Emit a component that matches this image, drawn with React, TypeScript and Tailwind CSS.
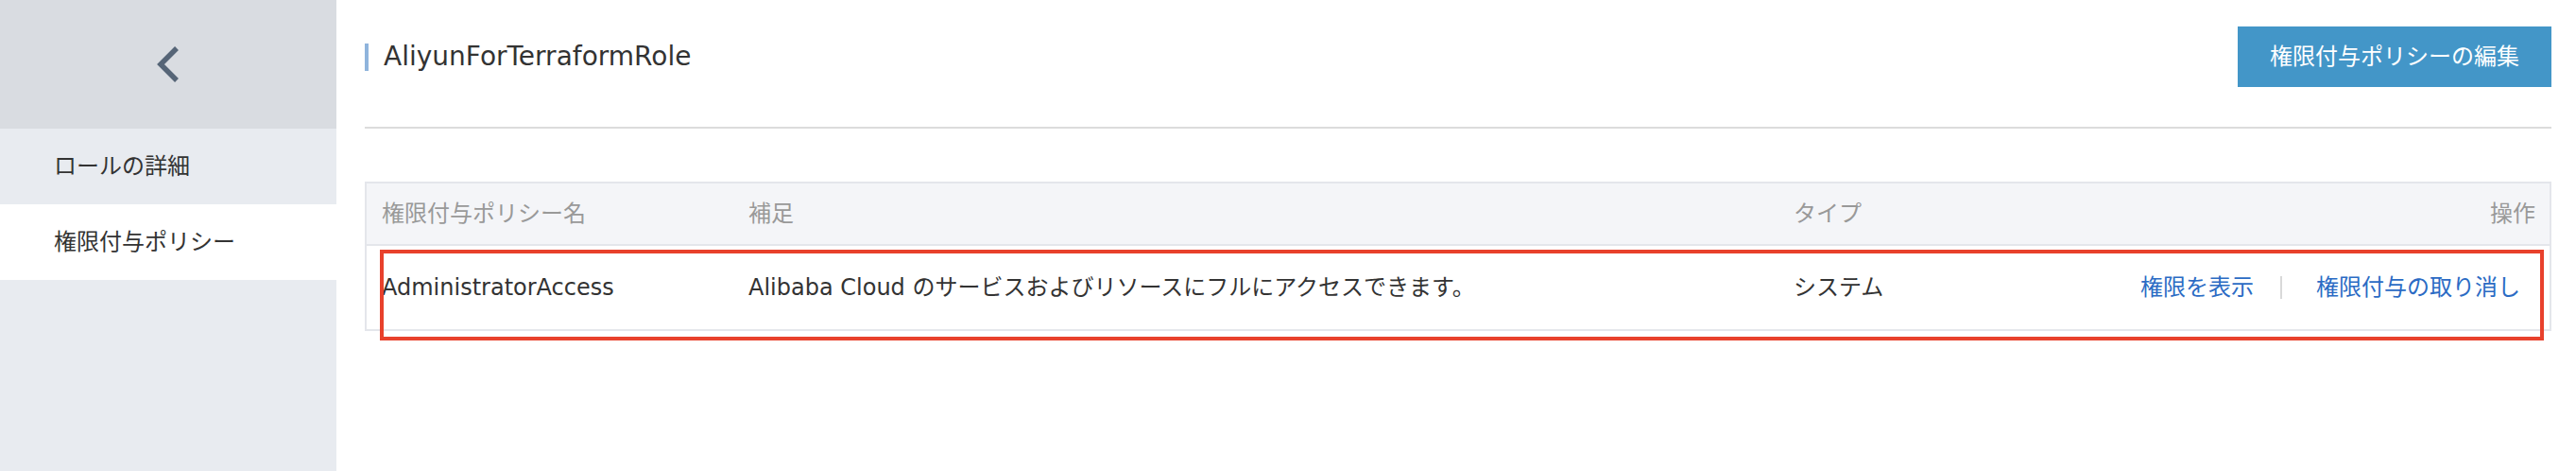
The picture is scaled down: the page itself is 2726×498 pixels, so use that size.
const font = "font-['DejaVu_Sans','Noto_Sans_CJK_JP',sans-serif]";

const menu = [
  { label: "ロールの詳細", active: false },
  { label: "権限付与ポリシー", active: true },
];

function Sidebar() {
  return (
    <aside className="w-[356px] shrink-0 bg-[#e8ebf0] flex flex-col">
      <div className="h-[136px] bg-[#d9dce1] flex items-center justify-center">
        <svg width="26" height="40" viewBox="0 0 26 40" fill="none" aria-hidden>
          <path d="M22 3 L5 20 L22 37" stroke="#566577" strokeWidth="5.5" strokeLinecap="butt" strokeLinejoin="miter" />
        </svg>
      </div>
      {menu.map((m) => (
        <div
          key={m.label}
          className={`h-[80px] flex items-center pl-[57px] text-[24px] text-[#333] ${m.active ? "bg-white" : "bg-[#e8ebf0]"}`}
        >
          {m.label}
        </div>
      ))}
    </aside>
  );
}

function PolicyTable() {
  return (
    <div className="relative mt-[56px] border-2 border-[#e4e6eb]">
      <div className="grid grid-cols-[388px_1106px_1fr_auto] h-[66px] items-center bg-[#f4f5f8] text-[24px] text-[#999] border-b-2 border-[#e4e6eb]">
        <div className="pl-[16px]">権限付与ポリシー名</div>
        <div className="pl-[16px]">補足</div>
        <div className="pl-[16px]">タイプ</div>
        <div className="pr-[15px] text-right">操作</div>
      </div>
      <div className="grid grid-cols-[388px_1106px_1fr_auto] h-[88px] items-center bg-white text-[24px] text-[#333]">
        <div className="pl-[16px]">AdministratorAccess</div>
        <div className="pl-[16px]">Alibaba Cloud のサービスおよびリソースにフルにアクセスできます。</div>
        <div className="pl-[16px]">システム</div>
        <div className="pr-[31px] flex items-center text-[#2b6bc4]">
          <span>権限を表示</span>
          <span className="ml-[28px] mr-[36px] w-[2px] h-[24px] bg-[#d9d9d9]" />
          <span>権限付与の取り消し</span>
        </div>
      </div>
      <div className="absolute left-[14px] right-[6px] top-[70px] -bottom-[12px] border-4 border-[#e8412c] pointer-events-none" />
    </div>
  );
}

export default function App() {
  return (
    <div className={`flex h-[498px] w-[2726px] bg-white ${font}`}>
      <Sidebar />
      <main className="flex-1 pl-[30px] pr-[26px]">
        <div className="mt-[28px] flex h-[64px] items-center justify-between">
          <div className="flex items-center">
            <span className="w-[4px] h-[29px] bg-[#8fb4dc]" />
            <h1 className="ml-[16px] text-[28px] text-[#333] leading-none">AliyunForTerraformRole</h1>
          </div>
          <button className="h-[64px] px-[34px] bg-[#4396c8] text-white text-[24px]">
            権限付与ポリシーの編集
          </button>
        </div>
        <div className="mt-[42px] h-[2px] bg-[#dcdcdc]" />
        <PolicyTable />
      </main>
    </div>
  );
}
